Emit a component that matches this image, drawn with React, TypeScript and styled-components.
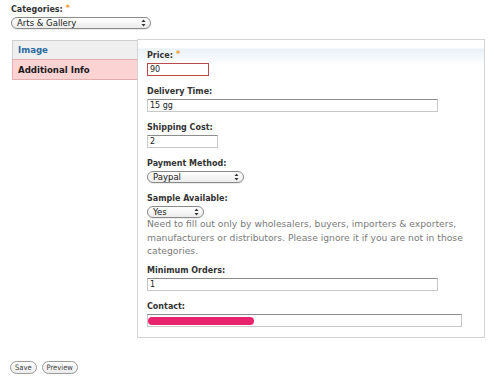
import styled, { createGlobalStyle } from 'styled-components'

const GlobalStyle = createGlobalStyle`
  body {
    margin: 0;
    background: #fff;
    font-family: "DejaVu Sans", Verdana, sans-serif;
    color: #222;
  }
`

const Page = styled.div`
  padding: 4px 0 0 11px;
  width: 474px;
`

const Label = styled.div`
  font-size: 8px;
  font-weight: bold;
  line-height: 12px;
  color: #333;
  margin-bottom: 1px;
  white-space: nowrap;
`

const Req = styled.span`
  color: #f0a02a;
  margin-left: 3px;
  position: relative;
  top: -1px;
`

const SelectBox = styled.div<{ $width: number }>`
  box-sizing: border-box;
  width: ${p => p.$width}px;
  height: 12px;
  border: 1px solid #8a8a8a;
  border-radius: 6px;
  background: linear-gradient(#ffffff, #ececec);
  display: flex;
  align-items: center;
  justify-content: space-between;
  padding: 0 4px 0 5px;
  font-size: 8.5px;
  color: #222;
  box-shadow: 0 1px 0 rgba(0, 0, 0, 0.08);
`

const Arrows = () => (
  <svg width="5" height="8" viewBox="0 0 5 8">
    <path d="M2.5 0.5 L4.5 3 L0.5 3 Z" fill="#333" />
    <path d="M2.5 7.5 L4.5 5 L0.5 5 Z" fill="#333" />
  </svg>
)

const Select = ({ width, value }: { width: number; value: string }) => (
  <SelectBox $width={width}>
    <span>{value}</span>
    <Arrows />
  </SelectBox>
)

const Body = styled.div`
  display: flex;
  margin-top: 10px;
`

const Tabs = styled.div`
  width: 125px;
  margin-left: 1px;
  padding-top: 1px;
  display: flex;
  flex-direction: column;
`

const Tab = styled.div<{ $active?: boolean }>`
  box-sizing: border-box;
  height: ${p => (p.$active ? '21px' : '20px')};
  display: flex;
  align-items: center;
  padding-left: 5px;
  font-size: 8.6px;
  font-weight: bold;
  border: 1px solid ${p => (p.$active ? '#e2aeae' : '#cfcfcf')};
  border-right: none;
  margin-top: ${p => (p.$active ? '-1px' : '0')};
  background: ${p => (p.$active ? '#fcd3d3' : '#efefef')};
  color: ${p => (p.$active ? '#1a1a1a' : '#2c6aa4')};
`

const Panel = styled.div`
  box-sizing: border-box;
  width: 348px;
  height: 299px;
  border: 1px solid #d4d4d4;
  background: linear-gradient(#fff 0, #fff 8px, #e9f1f8 9px, #fff 26px);
  padding: 10px 9px 9px 9px;
`

const Field = styled.div`
  margin-bottom: 10px;
  &:last-child {
    margin-bottom: 0;
  }
`

const Input = styled.div<{ $width: number; $error?: boolean }>`
  box-sizing: border-box;
  width: ${p => p.$width}px;
  height: 13px;
  border: 1px solid ${p => (p.$error ? '#b84c4c' : '#c8c8c8')};
  border-top-color: ${p => (p.$error ? '#b84c4c' : '#8c8c8c')};
  background: #fff;
  font-size: 8px;
  line-height: 11px;
  padding-left: 2px;
  color: #222;
  position: relative;
`

const Redacted = styled.span`
  position: absolute;
  left: 0;
  top: 2px;
  width: 106px;
  height: 8px;
  border-radius: 4px;
  background: #e8246e;
`

const Help = styled.p`
  margin: -1px 0 -3px;
  width: 330px;
  font-size: 9.2px;
  line-height: 13.5px;
  color: #7a7a7a;
`

const Buttons = styled.div`
  display: flex;
  gap: 5px;
  margin-top: 23px;
  margin-left: -1px;
`

const Button = styled.div`
  height: 11px;
  padding: 0 4px;
  border: 1px solid #9a9a9a;
  border-radius: 7px;
  background: linear-gradient(#ffffff, #ebebeb);
  font-family: "DejaVu Sans Condensed", "DejaVu Sans", sans-serif;
  font-size: 7.5px;
  line-height: 11px;
  color: #444;
`

function App() {
  return (
    <Page>
      <GlobalStyle />
      <Label>
        Categories:<Req>*</Req>
      </Label>
      <Select width={140} value="Arts & Gallery" />

      <Body>
        <Tabs>
          <Tab>Image</Tab>
          <Tab $active>Additional Info</Tab>
        </Tabs>
        <Panel>
          <Field>
            <Label>
              Price:<Req>*</Req>
            </Label>
            <Input $width={62} $error>90</Input>
          </Field>
          <Field>
            <Label>Delivery Time:</Label>
            <Input $width={291}>15 gg</Input>
          </Field>
          <Field>
            <Label>Shipping Cost:</Label>
            <Input $width={71}>2</Input>
          </Field>
          <Field>
            <Label>Payment Method:</Label>
            <Select width={97} value="Paypal" />
          </Field>
          <Field>
            <Label>Sample Available:</Label>
            <Select width={57} value="Yes" />
            <Help>
              Need to fill out only by wholesalers, buyers, importers &amp; exporters,
              manufacturers or distributors. Please ignore it if you are not in those
              categories.
            </Help>
          </Field>
          <Field>
            <Label>Minimum Orders:</Label>
            <Input $width={291}>1</Input>
          </Field>
          <Field>
            <Label>Contact:</Label>
            <Input $width={315}>
              <Redacted />
            </Input>
          </Field>
        </Panel>
      </Body>

      <Buttons>
        <Button>Save</Button>
        <Button>Preview</Button>
      </Buttons>
    </Page>
  )
}

export default App
